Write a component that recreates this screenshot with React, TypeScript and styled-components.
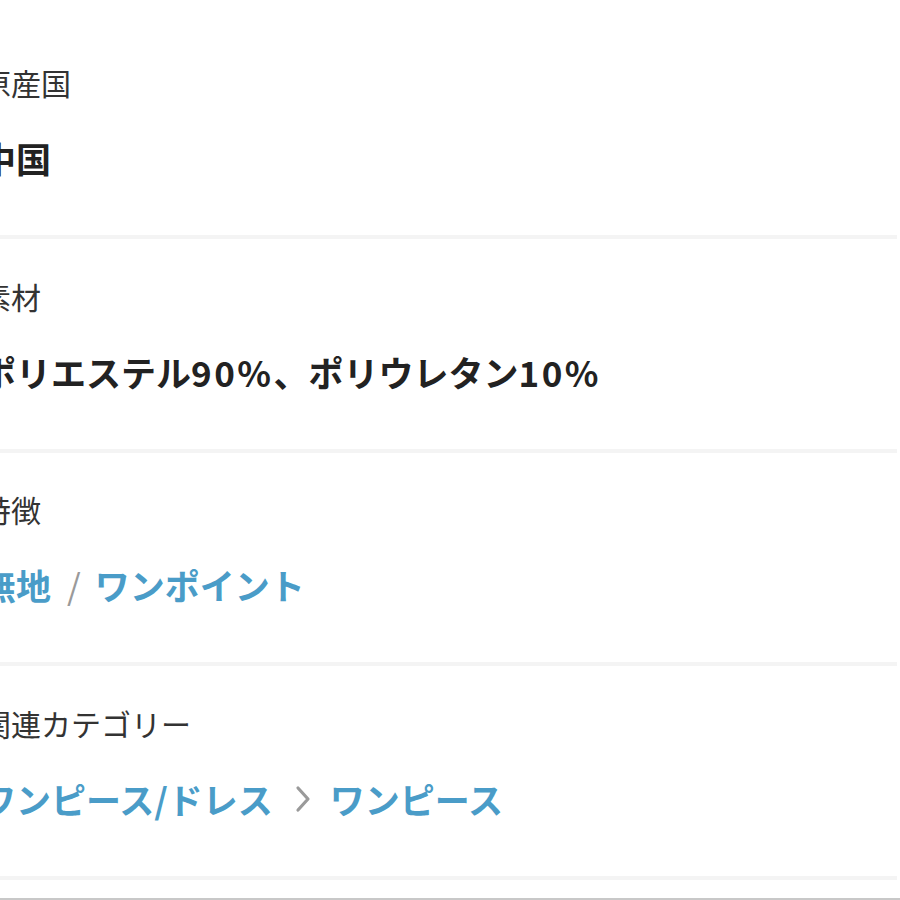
import React from "react";
import styled, { createGlobalStyle } from "styled-components";

const GlobalStyle = createGlobalStyle`
  html, body {
    margin: 0;
    padding: 0;
    background: #fff;
    overflow: hidden;
  }
  body {
    font-family: "Noto Sans CJK JP", "Noto Sans", sans-serif;
  }
`;

const Page = styled.div`
  width: 900px;
  height: 900px;
  overflow: hidden;
  padding-top: 25.5px;
  box-sizing: border-box;
`;

const SpecList = styled.dl`
  margin: 0 0 0 -19px;
  width: 916px;
`;

const SpecRow = styled.div`
  padding: 36.5px 0 54px;
  border-bottom: 4px solid #f4f4f4;
`;

const Label = styled.dt`
  margin: 0;
  font-size: 30px;
  line-height: 40px;
  font-weight: 400;
  color: #333;
`;

const Value = styled.dd`
  display: flex;
  align-items: center;
  margin: 33px 0 0;
  font-size: 35px;
  line-height: 46px;
  font-weight: 600;
  color: #222;
  white-space: nowrap;
`;

const Num = styled.span`
  letter-spacing: 2.5px;
`;

const LinkText = styled.a`
  color: #4a9cc8;
  text-decoration: none;
  font-weight: 600;
`;

const Slash = styled.span`
  margin: 0 14px 0 16px;
  color: #9a9a9a;
  font-weight: 400;
`;

const Chevron = styled.svg`
  width: 16px;
  height: 28px;
  margin: 0 19px 0 22px;
  flex-shrink: 0;
`;

const BottomEdge = styled.div`
  margin-top: 18px;
  border-top: 2px solid #c8c8c8;
`;

const ChevronIcon = () => (
  <Chevron viewBox="0 0 16 28">
    <polyline
      points="3,3 13,14 3,25"
      fill="none"
      stroke="#9a9a9a"
      strokeWidth="3.2"
      strokeLinecap="round"
      strokeLinejoin="round"
    />
  </Chevron>
);

export default function App() {
  return (
    <>
      <GlobalStyle />
      <Page>
        <SpecList>
          <SpecRow>
            <Label>原産国</Label>
            <Value>中国</Value>
          </SpecRow>
          <SpecRow>
            <Label>素材</Label>
            <Value>
              ポリエステル<Num>90%</Num>、ポリウレタン<Num>10%</Num>
            </Value>
          </SpecRow>
          <SpecRow>
            <Label>特徴</Label>
            <Value>
              <LinkText href="#">無地</LinkText>
              <Slash>/</Slash>
              <LinkText href="#">ワンポイント</LinkText>
            </Value>
          </SpecRow>
          <SpecRow>
            <Label>関連カテゴリー</Label>
            <Value>
              <LinkText href="#">ワンピース/ドレス</LinkText>
              <ChevronIcon />
              <LinkText href="#">ワンピース</LinkText>
            </Value>
          </SpecRow>
        </SpecList>
        <BottomEdge />
      </Page>
    </>
  );
}
